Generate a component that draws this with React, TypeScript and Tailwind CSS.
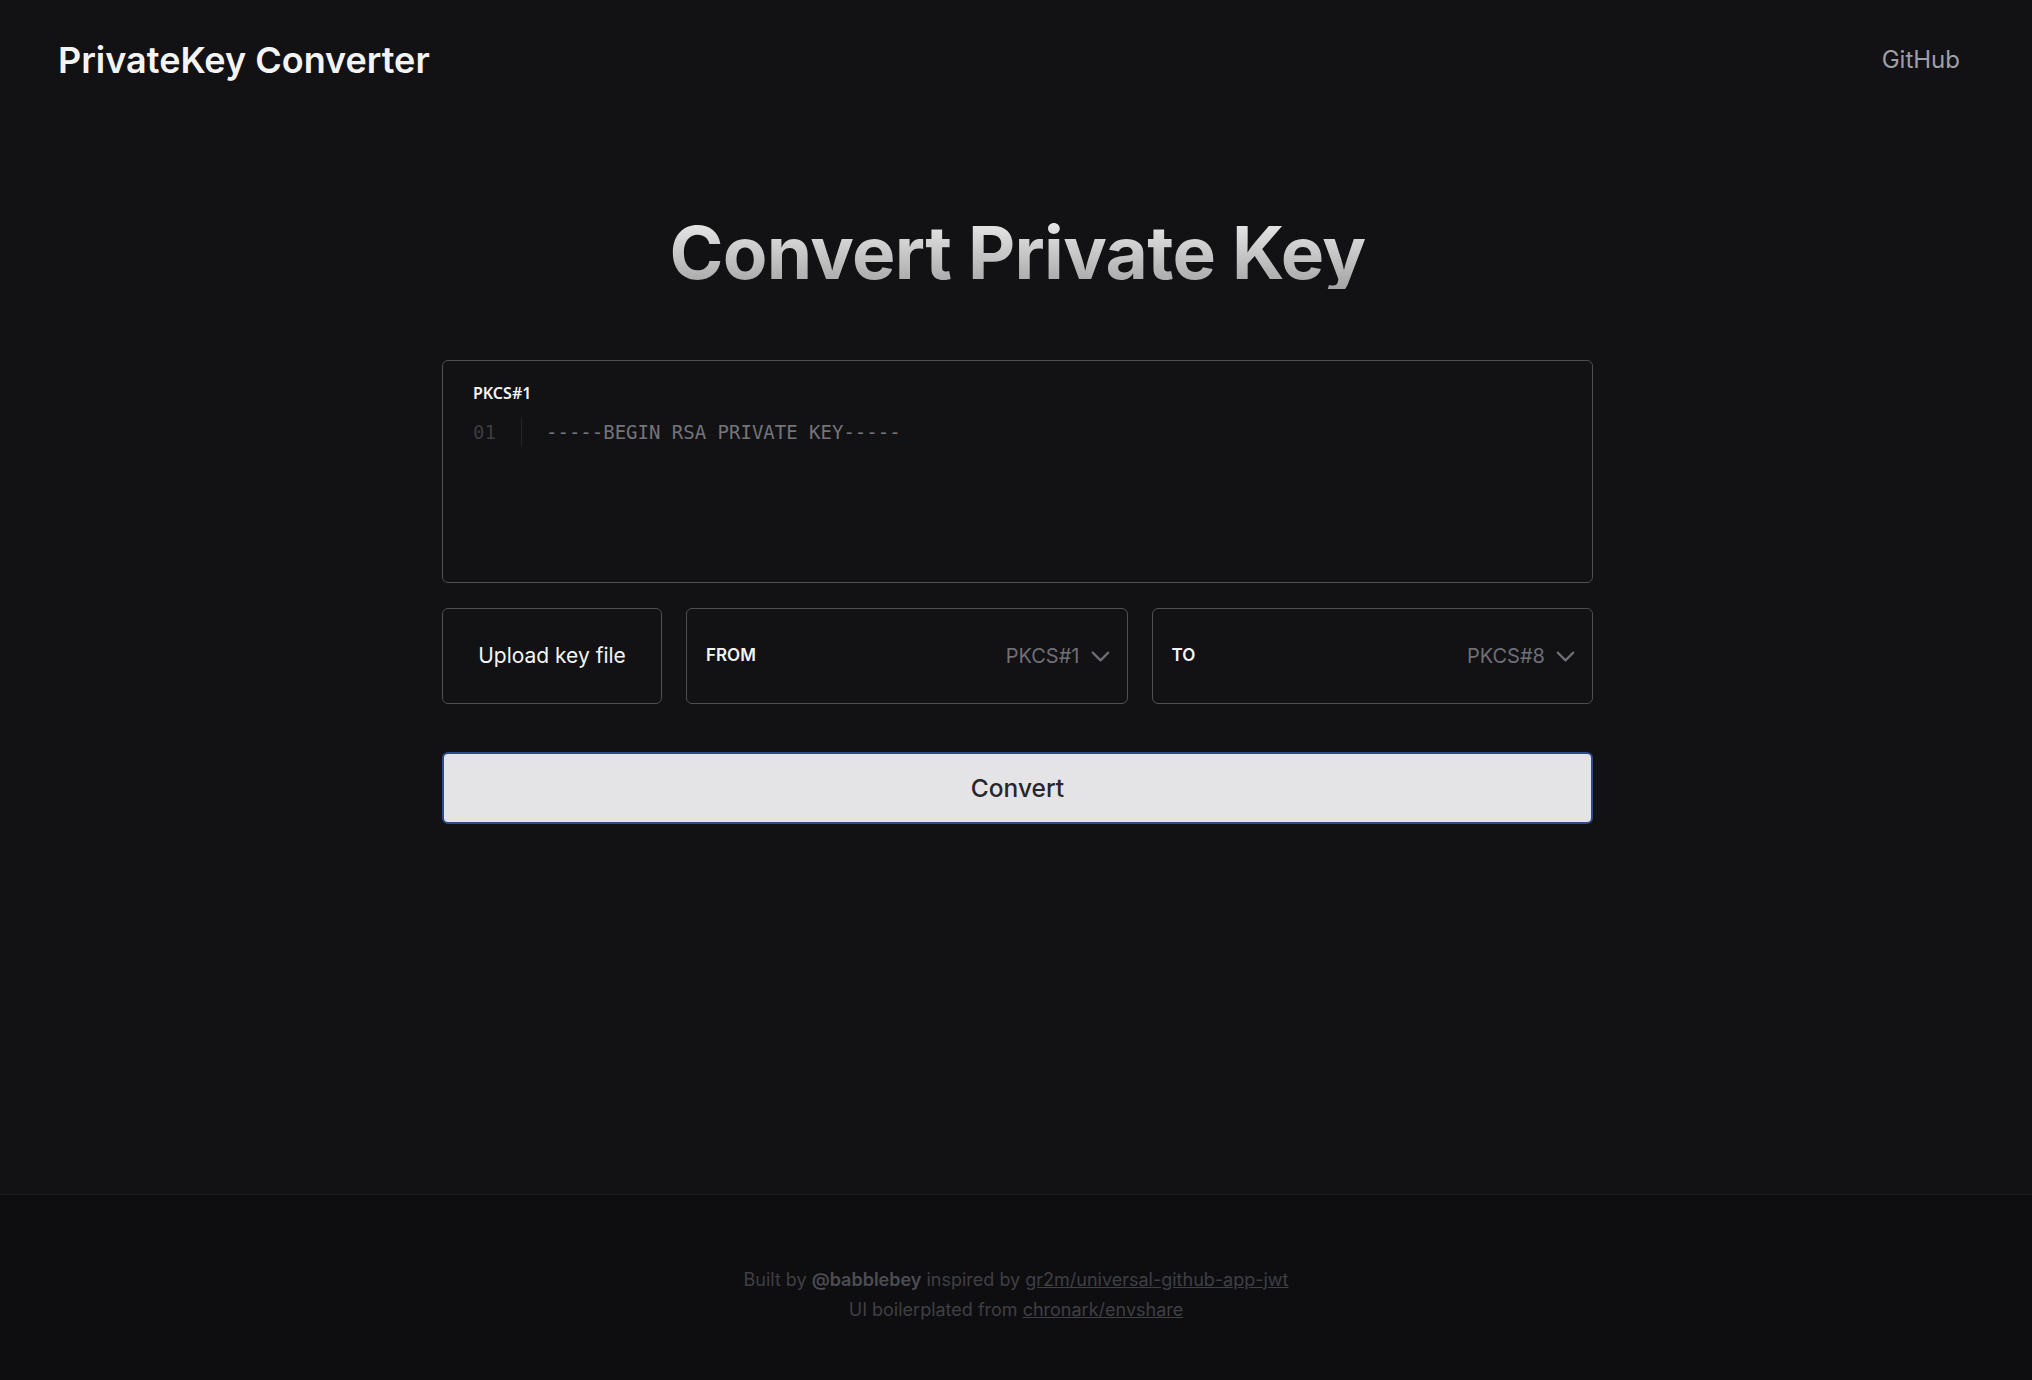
import { ChevronDown } from "lucide-react";

function FormatSelect({ label, value }: { label: string; value: string }) {
    return (
        <div className="flex flex-1 items-center justify-between rounded-md border border-[#4e4e54] pl-[19px] pr-[11px]">
            <span className="text-[17px] font-semibold text-zinc-100">{label}</span>
            <div className="flex items-center gap-[5px] text-[#6f6f77]">
                <span className="text-[20px]">{value}</span>
                <ChevronDown size={31} strokeWidth={1.7} />
            </div>
        </div>
    );
}

export default function App() {
    return (
        <div className="flex min-h-screen flex-col bg-[#121214] font-['Inter',sans-serif] text-zinc-100">
            <header className="flex h-[120px] items-center justify-between pl-[58px] pr-[72px]">
                <h1 className="text-[36px] font-semibold text-zinc-100">PrivateKey Converter</h1>
                <a className="text-[24px] text-zinc-400">GitHub</a>
            </header>

            <main className="flex flex-1 flex-col items-center pl-[3px]">
                <h2 className="mt-[97px] bg-linear-to-b from-[#ececec] to-[#a4a4a4] bg-clip-text text-[73px] leading-[72px] font-bold tracking-[-0.7px] text-transparent">
                    Convert Private Key
                </h2>

                <div className="mt-[71px] w-[1151px]">
                    <div className="h-[223px] rounded-md border border-[#4e4e54] px-[30px] pt-[20px]">
                        <div className="font-['Noto_Sans',sans-serif] text-[16px] font-semibold text-zinc-100">PKCS#1</div>
                        <div className="mt-[12px] flex font-['DejaVu_Sans_Mono',monospace] text-[19px] leading-[30px]">
                            <span className="w-[48px] text-[#3d3d43]">01</span>
                            <span className="border-l border-[#26262a] pl-[24px] text-[#74747c]">-----BEGIN RSA PRIVATE KEY-----</span>
                        </div>
                    </div>

                    <div className="mt-[25px] flex h-[96px] gap-6">
                        <button className="w-[220px] rounded-md border border-[#4e4e54] text-[21px] text-zinc-100">Upload key file</button>
                        <FormatSelect label="FROM" value="PKCS#1" />
                        <FormatSelect label="TO" value="PKCS#8" />
                    </div>

                    <button className="mt-[48px] h-[72px] w-full rounded-md border-2 border-[#2c4a8c] bg-zinc-200 text-[24.5px] font-medium text-zinc-800">
                        Convert
                    </button>
                </div>
            </main>

            <footer className="flex h-[186px] flex-col items-center justify-center border-t border-[#1d1d20] bg-[#0e0e10] pt-[14px] text-[18px] leading-[30px] text-[#3f3f45]">
                <p>
                    Built by <span className="font-semibold text-[#4c4c53]">@babblebey</span> inspired by{" "}
                    <a className="underline">gr2m/universal-github-app-jwt</a>
                </p>
                <p>
                    UI boilerplated from <a className="underline">chronark/envshare</a>
                </p>
            </footer>
        </div>
    );
}
